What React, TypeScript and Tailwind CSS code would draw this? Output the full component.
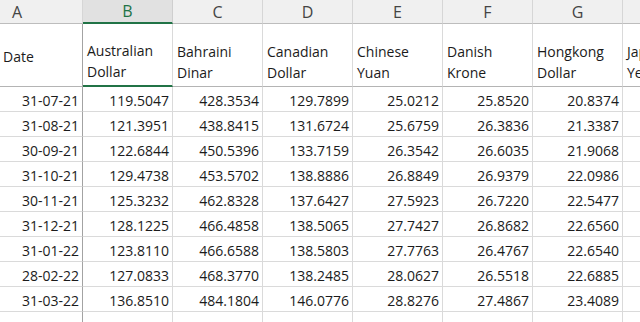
const letters = ['A', 'B', 'C', 'D', 'E', 'F', 'G', 'H'];

const headers: string[][] = [
  ['Date'],
  ['Australian', 'Dollar'],
  ['Bahraini', 'Dinar'],
  ['Canadian', 'Dollar'],
  ['Chinese', 'Yuan'],
  ['Danish', 'Krone'],
  ['Hongkong', 'Dollar'],
  ['Japanese', 'Yen'],
];

const rows: string[][] = [
  ['31-07-21', '119.5047', '428.3534', '129.7899', '25.0212', '25.8520', '20.8374'],
  ['31-08-21', '121.3951', '438.8415', '131.6724', '25.6759', '26.3836', '21.3387'],
  ['30-09-21', '122.6844', '450.5396', '133.7159', '26.3542', '26.6035', '21.9068'],
  ['31-10-21', '129.4738', '453.5702', '138.8886', '26.8849', '26.9379', '22.0986'],
  ['30-11-21', '125.3232', '462.8328', '137.6427', '27.5923', '26.7220', '22.5477'],
  ['31-12-21', '128.1225', '466.4858', '138.5065', '27.7427', '26.8682', '22.6560'],
  ['31-01-22', '123.8110', '466.6588', '138.5803', '27.7763', '26.4767', '22.6540'],
  ['28-02-22', '127.0833', '468.3770', '138.2485', '28.0627', '26.5518', '22.6885'],
  ['31-03-22', '136.8510', '484.1804', '146.0776', '28.8276', '27.4867', '23.4089'],
  ['', '', '', '', '', '', ''],
];

export default function App() {
  return (
    <div className="w-[640px] h-[322px] overflow-hidden bg-white text-[#1b1b1b] font-['Open_Sans',sans-serif]">
      <div className="grid grid-cols-[83px_repeat(7,90px)] w-max">
        {/* column letters */}
        {letters.map((l, i) => (
          <div
            key={l}
            className={
              'h-[24px] flex items-center text-[16px] border-r ' +
              (i === 0 ? 'justify-start pl-[12px] ' : 'justify-center ') +
              (i === 1
                ? 'bg-[#e1e1e1] text-[#217346] border-b-2 border-b-[#217346] border-r-[#cfcfcf]'
                : 'bg-[#f0f0f0] text-[#444444] border-b border-b-[#bdbdbd] border-r-[#d6d6d6]')
            }
          >
            {l}
          </div>
        ))}

        {/* header row (frozen) */}
        {headers.map((h, i) => (
          <div
            key={i}
            className={
              'h-[63px] flex flex-col text-[14px] leading-[21px] pl-[3px] border-r ' +
              (i === 0 ? 'justify-center pt-[3px] border-r-[#a3a3a3] ' : 'justify-end pb-[3px] pl-[4px] border-r-[#dadada] ') +
              (i === 1 ? 'border-b-2 border-b-[#217346]' : 'border-b border-b-[#b4b4b4]')
            }
          >
            {h.map((t) => (
              <span key={t}>{t}</span>
            ))}
          </div>
        ))}

        {/* data rows */}
        {rows.map((r, ri) =>
          [...r, ''].map((v, ci) => (
            <div
              key={ri + '-' + ci}
              className={
                'h-[25px] text-[14px] leading-[25px] pt-[1px] text-right pr-[3px] border-b border-b-[#dadada] border-r ' +
                (ci === 0 ? 'border-r-[#a3a3a3]' : 'border-r-[#dadada]')
              }
            >
              {v}
            </div>
          ))
        )}
      </div>
    </div>
  );
}
